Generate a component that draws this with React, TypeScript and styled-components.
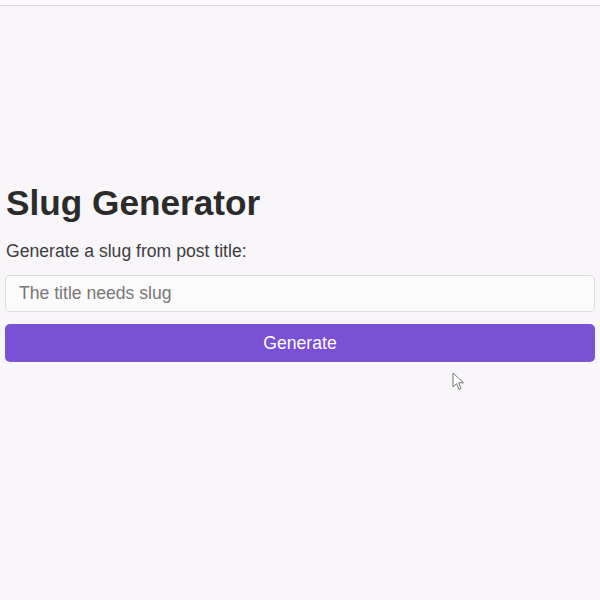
import styled, { createGlobalStyle } from 'styled-components';

const GlobalStyle = createGlobalStyle`
  html, body {
    margin: 0;
    padding: 0;
    background: #f8f6f9;
    font-family: 'Liberation Sans', Arial, sans-serif;
  }
`;

const Page = styled.div`
  position: relative;
  height: 600px;
  display: flex;
  flex-direction: column;
  background: #f8f6f9;
`;

const TopBar = styled.div`
  height: 5px;
  background: #fdfbfd;
  border-bottom: 1px solid #d6d4d8;
`;

const Main = styled.main`
  flex: 1;
  display: flex;
  flex-direction: column;
  padding: 176px 5px 0;
`;

const Title = styled.h1`
  margin: 0 0 0 1px;
  font-size: 35.2px;
  font-weight: 700;
  color: #2b2b2b;
  line-height: 42px;
`;

const Label = styled.label`
  margin: 17px 0 0 1px;
  font-size: 17.6px;
  color: #3d3d3d;
  line-height: 21px;
`;

const Input = styled.input`
  margin-top: 13px;
  height: 37px;
  box-sizing: border-box;
  padding: 0 13px;
  border: 1px solid #dcdadd;
  border-radius: 5px;
  background: #fcfbfc;
  font-family: inherit;
  font-size: 17.6px;
  color: #333;
  outline: none;

  &::placeholder {
    color: #777;
  }
`;

const Button = styled.button`
  margin-top: 12px;
  height: 38px;
  border: none;
  border-radius: 5px;
  background: #7a50d4;
  color: #fff;
  font-family: inherit;
  font-size: 17.6px;
  cursor: pointer;
`;

const Cursor = styled.svg`
  position: absolute;
  left: 452px;
  top: 372px;
`;

export default function App() {
  return (
    <>
      <GlobalStyle />
      <Page>
        <TopBar />
        <Main>
          <Title>Slug Generator</Title>
          <Label htmlFor='title'>Generate a slug from post title:</Label>
          <Input id='title' placeholder='The title needs slug' />
          <Button>Generate</Button>
        </Main>
        <Cursor width='14' height='20' viewBox='0 0 14 20'>
          <path
            d='M1 1 L1 15 L4.5 11.5 L7 17.5 L9 16.6 L6.6 10.8 L11.5 10.8 Z'
            fill='#fff'
            stroke='#777'
            strokeWidth='1'
            strokeLinejoin='round'
          />
        </Cursor>
      </Page>
    </>
  );
}
